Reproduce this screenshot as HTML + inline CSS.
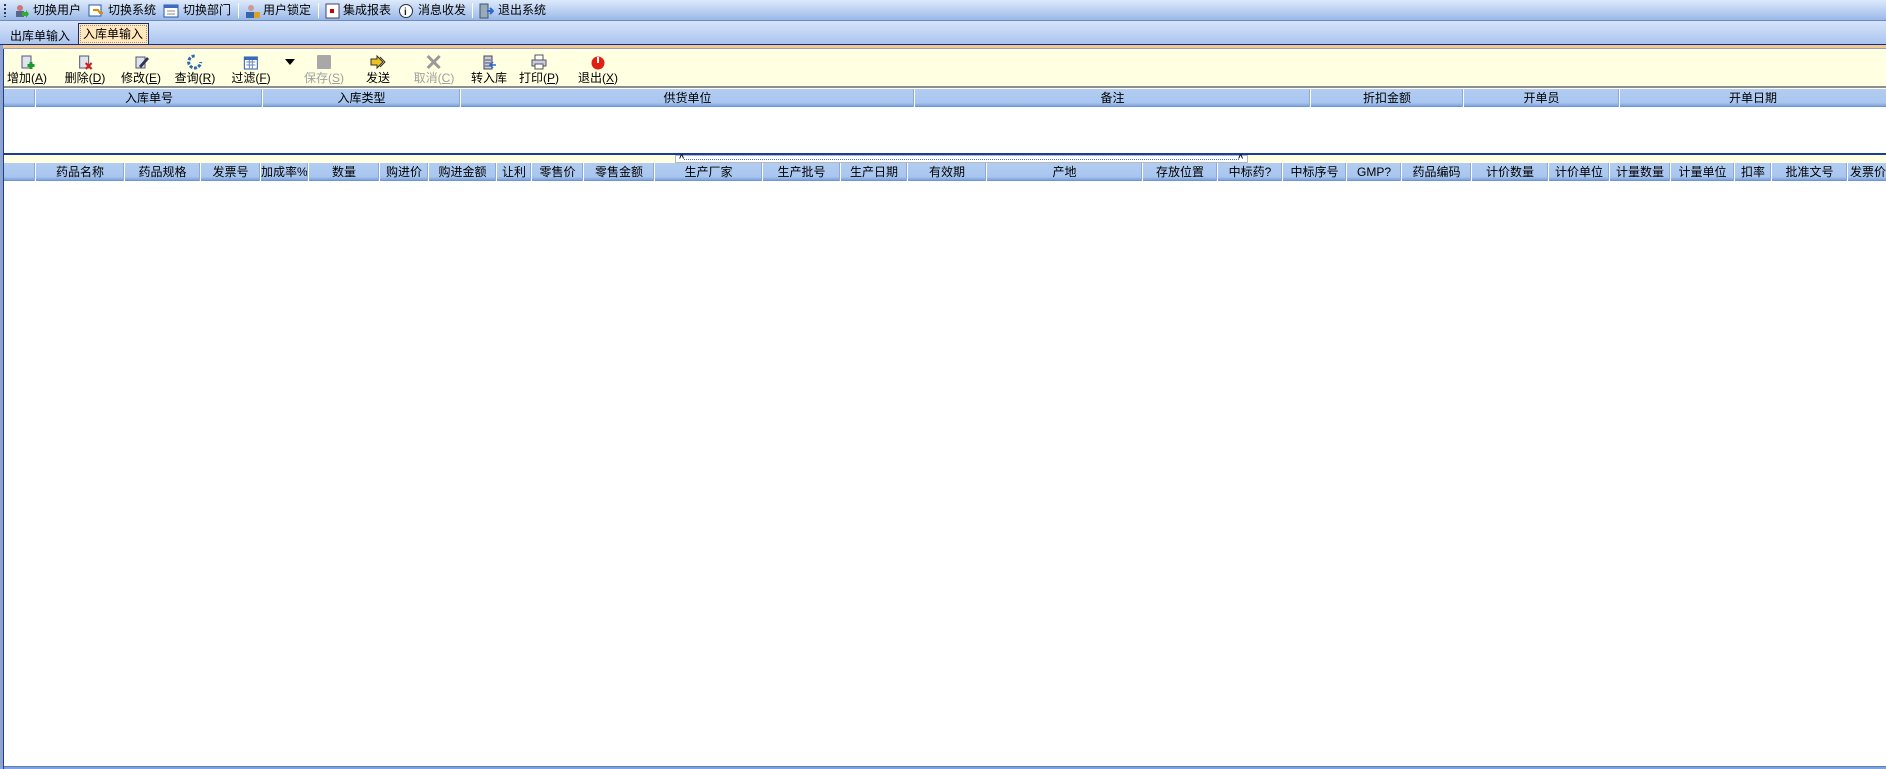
<!DOCTYPE html>
<html><head><meta charset="utf-8"><style>
*{margin:0;padding:0;box-sizing:border-box}
body{width:1886px;height:769px;overflow:hidden;background:#fff;position:relative;font-family:"Liberation Sans","WenQuanYi Zen Hei","Noto Sans CJK SC",sans-serif;font-size:12px;color:#000}
.a{position:absolute}
#top{left:0;top:0;width:1886px;height:21px;background:linear-gradient(#dde9fb,#b6cdf0 60%,#9ab8e6);border-bottom:1px solid #6b8cc4}
.ti{position:absolute;top:3px;white-space:nowrap;line-height:14px}
.sep{position:absolute;top:3px;width:1px;height:15px;background:#7a95c2;border-right:1px solid #fff}
#tabs{left:0;top:21px;width:1886px;height:24px;background:linear-gradient(#d6e4fa,#a9c3ee);}
#tabline{left:0;top:44px;width:1886px;height:1px;background:#0a2a8c}
#orange{left:0;top:45px;width:1886px;height:3px;background:#f0c890}
#gl{left:0;top:48px;width:1886px;height:1px;background:#a0a0a0}
#tb{left:4px;top:50px;width:1882px;height:38px;background:#ffffe1;border-bottom:2px solid #8e8e8e}
.btn{position:absolute;top:4px;text-align:center;white-space:nowrap;transform:translateX(-50%)}
.btn svg{display:block;margin:0 auto 1px;width:16px;height:16px}
.btn span{display:block;line-height:14px}
.dis{color:#a0a0a0}
.hdr{height:18px;background:linear-gradient(#b3cdf1,#a9c6ef 80%,#7fa3dc);border-bottom:1px solid #6f96d4}
.col{position:absolute;top:0;height:18px;line-height:18px;text-align:center;white-space:nowrap;overflow:hidden;border-left:1px solid #fff;box-shadow:-1px 0 0 #8aaadb}
u{text-decoration:underline}
</style></head><body>
<div id="top" class="a">
 <div class="a" style="left:4px;top:4px;width:2px;height:13px;background:repeating-linear-gradient(#334 0 2px,transparent 2px 4px)"></div>
 <svg class="a" style="left:13px;top:3px" width="16" height="16"><circle cx="7" cy="5" r="3" fill="#c77"/><rect x="3" y="8" width="8" height="6" fill="#568"/><path d="M9 9h4v-2l3 4-3 4v-2h-4z" fill="#3a3"/></svg>
 <div class="ti" style="left:33px">切换用户</div>
 <svg class="a" style="left:88px;top:3px" width="16" height="16"><rect x="1" y="2" width="12" height="11" fill="#fff" stroke="#2a5aa8"/><path d="M5 7h5l2 3h3" stroke="#e08a00" stroke-width="2" fill="none"/></svg>
 <div class="ti" style="left:108px">切换系统</div>
 <svg class="a" style="left:163px;top:3px" width="16" height="16"><rect x="1" y="2" width="14" height="12" fill="#fff" stroke="#2a5aa8"/><rect x="1" y="2" width="14" height="3" fill="#3a6ac0"/><path d="M4 8h8M4 11h8" stroke="#888"/></svg>
 <div class="ti" style="left:183px">切换部门</div>
 <div class="sep" style="left:238px"></div>
 <svg class="a" style="left:245px;top:3px" width="16" height="16"><circle cx="6" cy="5" r="3" fill="#c99"/><rect x="1" y="9" width="9" height="6" fill="#36a"/><rect x="9" y="9" width="6" height="6" fill="#e0a020"/></svg>
 <div class="ti" style="left:263px">用户锁定</div>
 <div class="sep" style="left:318px"></div>
 <svg class="a" style="left:325px;top:3px" width="16" height="16"><rect x="1" y="1" width="13" height="14" fill="#fff" stroke="#446"/><rect x="5" y="6" width="4" height="4" fill="#c00"/></svg>
 <div class="ti" style="left:343px">集成报表</div>
 <svg class="a" style="left:398px;top:3px" width="16" height="16"><circle cx="8" cy="8" r="6.5" fill="#fff" stroke="#234"/><text x="6" y="12" font-size="10" font-weight="bold" fill="#123">i</text></svg>
 <div class="ti" style="left:418px">消息收发</div>
 <div class="sep" style="left:472px"></div>
 <svg class="a" style="left:478px;top:3px" width="16" height="16"><rect x="2" y="1" width="8" height="14" fill="#9ab" stroke="#456"/><path d="M9 8h6M12 5l3 3-3 3" stroke="#2a6ad0" stroke-width="2" fill="none"/></svg>
 <div class="ti" style="left:498px">退出系统</div>
</div>
<div id="tabs" class="a">
 <div class="a" style="left:10px;top:6px">出库单输入</div>
 <div class="a" style="left:78px;top:2px;width:71px;height:22px;background:#ffe6bc;border:1px solid #1a2a6a;border-bottom:none;line-height:20px;padding-left:4px;outline:1px dotted #999;outline-offset:-3px">入库单输入</div>
</div>
<div id="tabline" class="a"></div><div id="orange" class="a"></div><div id="gl" class="a"></div>
<div class="a" style="left:0;top:45px;width:3px;height:724px;background:#8ea4cc"></div>
<div class="a" style="left:3px;top:49px;width:1px;height:720px;background:#1a3c9c"></div>
<div id="tb" class="a">
 <div class="btn" style="left:23px"><svg><rect x="3" y="2" width="9" height="12" fill="#dde4ee" stroke="#557"/><path d="M12 8v7M8.5 11.5h7" stroke="#1a9a2a" stroke-width="3"/></svg><span>增加(<u>A</u>)</span></div>
 <div class="btn" style="left:81px"><svg><rect x="3" y="2" width="9" height="12" fill="#dde4ee" stroke="#557"/><path d="M9 9l6 6M15 9l-6 6" stroke="#d02020" stroke-width="2.2"/></svg><span>删除(<u>D</u>)</span></div>
 <div class="btn" style="left:137px"><svg><rect x="3" y="3" width="9" height="11" fill="#dde4ee" stroke="#557"/><path d="M6 12l8-9 2 2-8 9z" fill="#335"/></svg><span>修改(<u>E</u>)</span></div>
 <div class="btn" style="left:191px"><svg><path d="M8 2a6 6 0 1 0 6 6" stroke="#2a6ab0" stroke-width="3" fill="none" stroke-dasharray="3 1.5"/></svg><span>查询(<u>R</u>)</span></div>
 <div class="btn" style="left:247px"><svg><rect x="1" y="3" width="13" height="12" fill="#fff" stroke="#2a5aa8"/><rect x="1" y="3" width="13" height="3" fill="#3a6ac0"/><path d="M3 8h9M3 11h9M6 6v9M9 6v9" stroke="#6a8ac0"/></svg><span>过滤(<u>F</u>)</span></div>
 <div class="a" style="left:281px;top:9px;width:0;height:0;border-left:5px solid transparent;border-right:5px solid transparent;border-top:6px solid #000"></div>
 <div class="btn dis" style="left:320px"><svg><rect x="1" y="1" width="14" height="14" rx="1" fill="#a8a8a8"/></svg><span>保存(<u>S</u>)</span></div>
 <div class="btn" style="left:374px"><svg><path d="M1 5h6V2l6 6-6 6v-3H1z" fill="#f0c020" stroke="#333"/><path d="M10 3l5 5-5 5" fill="none" stroke="#333"/></svg><span>发送</span></div>
 <div class="btn dis" style="left:430px"><svg><path d="M2 2l12 12M14 2L2 14" stroke="#999" stroke-width="3"/></svg><span>取消(<u>C</u>)</span></div>
 <div class="btn" style="left:485px"><svg><rect x="3" y="2" width="8" height="13" fill="#ccd" stroke="#445"/><path d="M4 6h6M4 9h6M4 12h6" stroke="#556"/><path d="M15 11h-5M12 8l-3 3 3 3" stroke="#2a6ad0" stroke-width="1.5" fill="none"/></svg><span>转入库</span></div>
 <div class="btn" style="left:535px"><svg><rect x="4" y="1" width="8" height="5" fill="#fff" stroke="#555"/><rect x="1" y="6" width="14" height="6" fill="#ccd" stroke="#556"/><rect x="4" y="10" width="8" height="5" fill="#fff" stroke="#555"/></svg><span>打印(<u>P</u>)</span></div>
 <div class="btn" style="left:594px"><svg><circle cx="8" cy="9" r="6.5" fill="#e02010"/><path d="M8 3v6" stroke="#fff" stroke-width="2"/></svg><span>退出(<u>X</u>)</span></div>
</div>
<div class="a hdr" style="left:4px;top:89px;width:1882px">
 <div class="col" style="left:31px;width:227px">入库单号</div>
 <div class="col" style="left:258px;width:198px">入库类型</div>
 <div class="col" style="left:456px;width:454px">供货单位</div>
 <div class="col" style="left:910px;width:396px">备注</div>
 <div class="col" style="left:1306px;width:153px">折扣金额</div>
 <div class="col" style="left:1459px;width:156px">开单员</div>
 <div class="col" style="left:1615px;width:267px">开单日期</div>
</div>
<div class="a" style="left:4px;top:153px;width:1882px;height:2px;background:#1a3c9c"></div>
<div class="a" style="left:4px;top:155px;width:1882px;height:8px;background:#ffffe1"></div>
<div class="a" style="left:675px;top:155px;width:573px;height:8px;background:#fff;border:1px solid #b8b8b8">
 <div class="a" style="left:8px;top:3px;width:555px;height:0;border-top:1px dotted #3a7ab8"></div>
 <div class="a" style="left:3px;top:-3px;font-size:9px;font-weight:bold">^</div>
 <div class="a" style="left:562px;top:-3px;font-size:9px;font-weight:bold">^</div>
</div>
<div class="a hdr" style="left:4px;top:163px;width:1882px">
 <div class="col" style="left:31px;width:89px">药品名称</div>
 <div class="col" style="left:120px;width:76px">药品规格</div>
 <div class="col" style="left:196px;width:60px">发票号</div>
 <div class="col" style="left:256px;width:48px;text-align:left">加成率%</div>
 <div class="col" style="left:304px;width:71px">数量</div>
 <div class="col" style="left:375px;width:49px">购进价</div>
 <div class="col" style="left:424px;width:68px">购进金额</div>
 <div class="col" style="left:492px;width:35px">让利</div>
 <div class="col" style="left:527px;width:52px">零售价</div>
 <div class="col" style="left:579px;width:71px">零售金额</div>
 <div class="col" style="left:650px;width:108px">生产厂家</div>
 <div class="col" style="left:758px;width:78px">生产批号</div>
 <div class="col" style="left:836px;width:67px">生产日期</div>
 <div class="col" style="left:903px;width:79px">有效期</div>
 <div class="col" style="left:982px;width:156px">产地</div>
 <div class="col" style="left:1138px;width:75px">存放位置</div>
 <div class="col" style="left:1213px;width:65px">中标药?</div>
 <div class="col" style="left:1278px;width:64px">中标序号</div>
 <div class="col" style="left:1342px;width:55px">GMP?</div>
 <div class="col" style="left:1397px;width:70px">药品编码</div>
 <div class="col" style="left:1467px;width:77px">计价数量</div>
 <div class="col" style="left:1544px;width:61px">计价单位</div>
 <div class="col" style="left:1605px;width:61px">计量数量</div>
 <div class="col" style="left:1666px;width:64px">计量单位</div>
 <div class="col" style="left:1730px;width:37px">扣率</div>
 <div class="col" style="left:1767px;width:76px">批准文号</div>
 <div class="col" style="left:1843px;width:39px;text-align:left;padding-left:2px">发票价</div>
</div>
<div class="a" style="left:4px;top:766px;width:1882px;height:3px;background:#7fa3dc;border-top:1px solid #5a7fc0"></div>
</body></html>
